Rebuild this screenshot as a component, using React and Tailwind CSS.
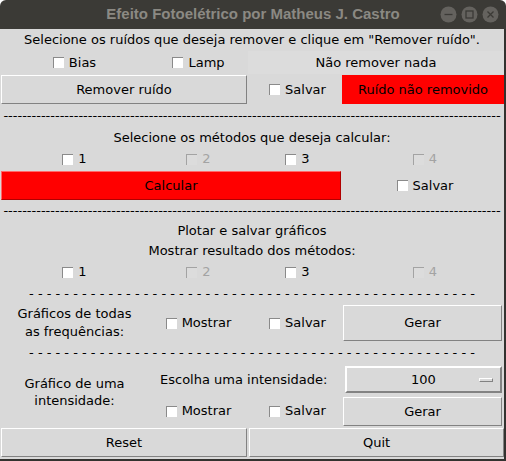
import React from 'react';

const font = { fontFamily: '"DejaVu Sans", sans-serif' };

function Check({ label, disabled }) {
  return (
    <div className="flex items-center gap-[5px]">
      <span
        className={`w-[11px] h-[11px] border-t border-l ${
          disabled ? 'bg-[#dcdcdc] border-[#a3a3a3]' : 'bg-white border-[#8a8a8a]'
        }`}
      />
      <span className={disabled ? 'text-[#a3a3a3]' : 'text-black'}>{label}</span>
    </div>
  );
}

function TkButton({ children, className = '' }) {
  return (
    <div
      className={`flex items-center justify-center bg-[#d9d9d9] border-t border-l border-white border-b border-r border-b-[#828282] border-r-[#828282] ${className}`}
    >
      {children}
    </div>
  );
}

function Dashes({ text, className = '' }) {
  return (
    <div className={`col-span-4 flex items-center justify-center overflow-hidden whitespace-pre ${className}`}>
      {text}
    </div>
  );
}

const dense = '-'.repeat(106);
const spaced = Array(51).fill('-').join(' ');

export default function App() {
  return (
    <div className="w-[506px] h-[461px] bg-white" style={font}>
      {/* title bar */}
      <div className="h-[29px] bg-[#3b3a36] rounded-t-[6px] flex items-center justify-center relative">
        <div className="text-[15px] font-bold text-[#8b8983] font-['Liberation_Sans',sans-serif]">
          Efeito Fotoelétrico por Matheus J. Castro
        </div>
        <div className="absolute right-[7px] top-[6px] flex items-center gap-[4px]">
          <svg width="17" height="17" viewBox="0 0 17 17">
            <circle cx="8.5" cy="8.5" r="8" fill="#64625e" />
            <line x1="4.5" y1="8.5" x2="12.5" y2="8.5" stroke="#3b3a36" strokeWidth="1.3" />
          </svg>
          <svg width="17" height="17" viewBox="0 0 17 17">
            <circle cx="8.5" cy="8.5" r="8" fill="#64625e" />
            <rect x="5" y="5" width="7" height="7" fill="none" stroke="#3b3a36" strokeWidth="1.3" />
          </svg>
          <svg width="17" height="17" viewBox="0 0 17 17">
            <circle cx="8.5" cy="8.5" r="8" fill="#64625e" />
            <path d="M5.5 5.5 L11.5 11.5 M11.5 5.5 L5.5 11.5" stroke="#3b3a36" strokeWidth="1.3" />
          </svg>
        </div>
      </div>

      {/* body */}
      <div
        className="bg-[#d9d9d9] border-r-2 border-b-2 border-[#33322f] text-[13px] text-black grid grid-cols-[149px_99px_94px_162px] grid-rows-[22px_23px_31px_22px_21px_22px_31px_20px_20px_20px_22px_21px_38px_22px_30px_33px_32px]"
      >
        <div className="col-span-4 flex items-center justify-center">
          Selecione os ruídos que deseja remover e clique em "Remover ruído".
        </div>

        <div className="flex items-center justify-center"><Check label="Bias" /></div>
        <div className="flex items-center justify-center"><Check label="Lamp" /></div>
        <div className="col-span-2 flex items-center justify-center bg-[#dcdcdc]">Não remover nada</div>

        <TkButton className="col-span-2 m-[1px]">Remover ruído</TkButton>
        <div className="flex items-center justify-center pl-[5px]"><Check label="Salvar" /></div>
        <div className="flex items-center justify-center bg-[#ff0000] my-[1px]">Ruído não removido</div>

        <Dashes text={dense} />

        <div className="col-span-4 flex items-center justify-center">Selecione os métodos que deseja calcular:</div>

        <div className="flex items-center justify-center"><Check label="1" /></div>
        <div className="flex items-center justify-center"><Check label="2" disabled /></div>
        <div className="flex items-center justify-center pl-[5px]"><Check label="3" /></div>
        <div className="flex items-center justify-center pl-[4px]"><Check label="4" disabled /></div>

        <div className="col-span-3 m-[1px] flex items-center justify-center bg-[#ff0000] border-t border-l border-[#ff6a6a] border-b border-r border-b-[#b00000] border-r-[#b00000]">
          Calcular
        </div>
        <div className="flex items-center justify-center pl-[4px]"><Check label="Salvar" /></div>

        <Dashes text={dense} />

        <div className="col-span-4 flex items-center justify-center">Plotar e salvar gráficos</div>
        <div className="col-span-4 flex items-center justify-center">Mostrar resultado dos métodos:</div>

        <div className="flex items-center justify-center"><Check label="1" /></div>
        <div className="flex items-center justify-center"><Check label="2" disabled /></div>
        <div className="flex items-center justify-center pl-[5px]"><Check label="3" /></div>
        <div className="flex items-center justify-center pl-[4px]"><Check label="4" disabled /></div>

        <Dashes text={spaced} />

        <div className="flex items-center justify-center text-center leading-[18px]">
          Gráficos de todas<br />as frequências:
        </div>
        <div className="flex items-center justify-center"><Check label="Mostrar" /></div>
        <div className="flex items-center justify-center pl-[5px]"><Check label="Salvar" /></div>
        <TkButton className="ml-[1px] mr-[2px] my-[1px]">Gerar</TkButton>

        <Dashes text={spaced} />

        <div className="row-span-2 flex items-center justify-center text-center leading-[17px] pb-[8px]">
          Gráfico de uma<br />intensidade:
        </div>
        <div className="col-span-2 flex items-center pl-[11px] pt-[1px]">Escolha uma intensidade:</div>
        <div className="ml-[3px] mr-[2px] mt-[2px] mb-[1px] relative flex items-center justify-center bg-[#d9d9d9] border-t-2 border-l-2 border-white border-b-2 border-r-2 border-b-[#828282] border-r-[#828282]">
          100
          <span className="absolute right-[7px] top-[10px] w-[14px] h-[4px] bg-[#d9d9d9] border-t border-l border-white border-b border-r border-b-[#828282] border-r-[#828282]" />
        </div>

        <div className="flex items-center justify-center pt-[1px]"><Check label="Mostrar" /></div>
        <div className="flex items-center justify-center pt-[1px] pl-[5px]"><Check label="Salvar" /></div>
        <TkButton className="ml-[1px] mr-[2px] mt-[3px] mb-[1px]">Gerar</TkButton>

        <TkButton className="col-span-2 mx-[1px] mt-[1px] mb-[2px]">Reset</TkButton>
        <TkButton className="col-span-2 ml-[1px] mt-[1px] mb-[2px]">Quit</TkButton>
      </div>
    </div>
  );
}
